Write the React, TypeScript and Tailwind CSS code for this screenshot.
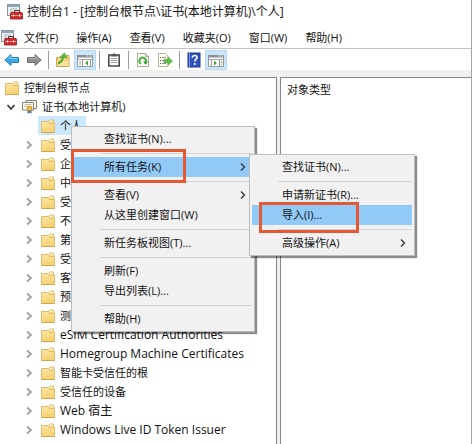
import React, { useState } from "react";

const ConsoleIcon: React.FC = () => (
  <svg width="16" height="16" viewBox="0 0 16 16" className="shrink-0">
    <rect x="0.5" y="0.5" width="12" height="11" fill="#eef1f4" stroke="#8d979f" />
    <rect x="1" y="1" width="11" height="2" fill="#8fa6b8" />
    <path d="M3 5h7M3 7h3" stroke="#a9b4bc" />
    <path d="M7.5 9V7.2Q7.5 6.500 8.200 6.500h3.600q.7 0 .7.7V9" fill="none" stroke="#70282a" strokeWidth="1.200" />
    <path d="M3.500 9.500Q3.500 8.500 4.500 8.500h10q1 0 1 1V15h-12z" fill="#cf2b2b" stroke="#96191c" strokeWidth="0.800" />
    <path d="M4 11.500h11" stroke="#f08d87" />
    <path d="M6.500 10.500v2M12.500 10.500v2" stroke="#fff" />
  </svg>
);

const FolderIcon: React.FC = () => (
  <svg width="14" height="14" viewBox="0 0 14 14" className="shrink-0">
    <defs>
      <linearGradient id="folder" x1="0" y1="0" x2="0.300" y2="1">
        <stop offset="0" stopColor="#fdeaae" />
        <stop offset="1" stopColor="#f8d273" />
      </linearGradient>
    </defs>
    <path d="M.5 2.500h7.200l1-1.500h3.800v2l1 .8v9.700H.5z" fill="url(#folder)" stroke="#dcbc6c" />
    <path d="M8.700 2.300h3" stroke="#fffae6" strokeWidth="1.200" />
    <path d="M7.800 4.300h4.700" stroke="#d9b35a" />
    <path d="M.5 13.500h13" stroke="#cfa64d" />
  </svg>
);

const CertificateIcon: React.FC = () => (
  <svg width="15" height="15" viewBox="0 0 15 15" className="shrink-0">
    <path d="M4 1.500h10.500v8H4z" fill="#fffdf5" stroke="#8a8270" />
    <path d="M.5 3.500h11v7.500H.5z" fill="#fffdf5" stroke="#8a8270" />
    <path d="M2.500 5.500h7M2.500 7.500h3" stroke="#c9bd98" />
    <path d="M5.500 10v4.700l2-1.300 2 1.300V10z" fill="#3b6fb5" />
    <circle cx="7.500" cy="9.500" r="2.400" fill="#f5c13a" stroke="#c08a1c" strokeWidth="0.800" />
  </svg>
);

const TreeArrow: React.FC<{ open?: boolean }> = ({ open }) => (
  <svg width="14" height="14" viewBox="0 0 14 14" fill="none" strokeWidth="1.800" className="shrink-0">
    {open ? <path d="m3.500 5 3.500 4 3.500-4" stroke="#3c3c3c" /> : <path d="m5 3.500 4 3.500-4 3.500" stroke="#a0a0a0" />}
  </svg>
);

const ArrowIcon: React.FC<{ back?: boolean }> = ({ back }) => (
  <svg width="16" height="16" viewBox="0 0 16 16">
    {back ? (
      <path d="M.8 8 7 2.500v3h7.500v5H7v3z" fill="#38a5e4" stroke="#2482bf" strokeLinejoin="round" />
    ) : (
      <path d="M15.200 8 9 2.500v3H1.500v5H9v3z" fill="#8e8e8e" stroke="#6d6d6d" strokeLinejoin="round" />
    )}
    <path
      d={back ? "M3 7.300 6.300 4.500v2h7" : "M13 7.300 9.700 4.500v2h-7"}
      fill="none"
      stroke={back ? "#86d3f7" : "#b5b5b5"}
    />
  </svg>
);

const UpFolderIcon: React.FC = () => (
  <svg width="16" height="16" viewBox="0 0 16 16">
    <path d="M1.500 5.500h7l1-2h4.500v11H1.500z" fill="#f6d47c" stroke="#cda753" />
    <path d="M2 9h11.500v5H2z" fill="#fbe09a" />
    <path d="M3 11.500C5.500 10.500 7.500 8.500 8.200 5" fill="none" stroke="#4bad2f" strokeWidth="2" />
    <path d="M5 5 9.500 1l2.500 5z" fill="#5fc03e" stroke="#3a9628" strokeWidth="0.600" />
  </svg>
);

const PaneIcon: React.FC<{ left?: boolean }> = ({ left }) => (
  <svg width="16" height="14" viewBox="0 0 16 14">
    <path d="M.5 2.500h15v11H.5z" fill="#fbfbfb" stroke="#999" />
    <path d="M0 2h16v2.500H0z" fill="#8c8f93" />
    <path d="M10 3h1M12 3h1M14 3h1" stroke="#fff" />
    <path d="M1 6.500h14" stroke="#a6a6a6" />
    {left ? (
      <>
        <path d="M5.500 7v6.500M13.500 7v6.500" stroke="#999" />
        <path d="M2 9h2M2 11h2" stroke="#999" />
        <path d="M11 7.800v4.600L8 10.100z" fill="#3fa52e" />
      </>
    ) : (
      <>
        <path d="M3.500 7v6.500M11.500 7v6.500" stroke="#999" />
        <path d="M12.500 9h2M12.500 11h2" stroke="#999" />
        <path d="M6 7.800v4.600l3-2.300z" fill="#3fa52e" />
      </>
    )}
  </svg>
);

const ClipboardIcon: React.FC = () => (
  <svg width="14" height="16" viewBox="0 0 14 16">
    <path d="M1.800 3h10.400v11H1.800z" fill="#fff" stroke="#4b4b4b" strokeWidth="1.600" />
    <path d="M4 4.500V2.500h2q0-1.200 1-1.200t1 1.200h2v2z" fill="#555" />
    <path d="M4 6.500h6M4 8.500h6M4 10.500h6" stroke="#999" />
  </svg>
);

const RefreshIcon: React.FC = () => (
  <svg width="14" height="16" viewBox="0 0 14 16">
    <path d="M1.500 1.500h8l3 3v10h-11z" fill="#fdfdf8" stroke="#a8a898" />
    <path d="M9.500 1.500v3h3" fill="none" stroke="#a8a898" />
    <path d="M5 11.800a3.300 3.300 0 1 1 4.800-1.800" fill="none" stroke="#43ad35" strokeWidth="1.800" />
    <path d="M7 9.500h5l-2.500 3.300z" fill="#339b2b" />
  </svg>
);

const ExportIcon: React.FC = () => (
  <svg width="16" height="16" viewBox="0 0 16 16">
    <path d="M1.500 1.500h7l2.500 2.500v10.500h-9.500z" fill="#fffdf0" stroke="#bcb497" />
    <path d="M3 5.500h1M3 8.500h1M3 11.500h1" stroke="#65645e" />
    <path d="M5 5.500h4M5 8.500h2M5 11.500h4" stroke="#9690af" />
    <path d="M7 7.500h4V5l4.500 4-4.500 4v-2.500H7z" fill="#63c348" stroke="#46a331" strokeWidth="0.700" />
  </svg>
);

const HelpIcon: React.FC = () => (
  <svg width="14" height="16" viewBox="0 0 14 16">
    <rect x="1" y="1" width="12" height="14" fill="#2d55bd" stroke="#1b3789" />
    <path d="M2.500 1v14" stroke="#7d99e2" />
    <path d="M5.300 5.700Q5.500 3.500 7.700 3.500T10 5.500C10 7.300 7.800 7.200 7.800 9.500" fill="none" stroke="#fff" strokeWidth="1.600" />
    <circle cx="7.800" cy="12" r="1.100" fill="#fff" />
  </svg>
);

const menus = ["文件(F)", "操作(A)", "查看(V)", "收藏夹(O)", "窗口(W)", "帮助(H)"];

const stores = [
  "受信任的根证书颁发机构",
  "企业信任",
  "中间证书颁发机构",
  "受信任的发布者",
  "不信任的证书",
  "第三方根证书颁发机构",
  "受信任人",
  "客户端身份验证颁发者",
  "预览版本根",
  "测试根",
  "eSIM Certification Authorities",
  "Homegroup Machine Certificates",
  "智能卡受信任的根",
  "受信任的设备",
  "Web 宿主",
  "Windows Live ID Token Issuer",
];

const isLatin = (name: string) => /^[a-z]/i.test(name);

const ToolButton: React.FC<{
  label: string;
  active?: boolean;
  children: React.ReactNode;
}> = ({ label, active, children }) => (
  <button
    aria-label={label}
    className={`flex h-5 w-[22px] items-center justify-center ${
      active ? "border border-[#b5d9f3] bg-[#cce6f9]" : ""
    }`}
  >
    {children}
  </button>
);

const ToolDivider: React.FC = () => (
  <div className="flex h-[18px] w-[7px] justify-center">
    <div className="w-px bg-[#9b9b9b]" />
  </div>
);

const MenuItem: React.FC<{
  label: string;
  active?: boolean;
  arrow?: boolean;
  onClick?: () => void;
}> = ({ label, active, arrow, onClick }) => (
  <button
    role="menuitem"
    onClick={onClick}
    className={`flex h-5 w-full items-center justify-between pl-[30px] pr-1 text-left ${
      active ? "bg-[#91c9f7]" : ""
    }`}
  >
    {label}
    {arrow && (
      <svg width="10" height="10" viewBox="0 0 10 10" fill="none" stroke="#333" strokeWidth="1.300">
        <path d="m3 1.500 3.500 3.500L3 8.500" />
      </svg>
    )}
  </button>
);

const MenuDivider: React.FC = () => (
  <div className="flex h-2 items-center pl-[26px]">
    <div className="h-px w-full bg-[#d2d2d2]" />
  </div>
);

const menuBox =
  "absolute border border-[#bdbdbd] bg-[#f1f1f1] p-[2px] shadow-[2px_2px_1px_rgba(0,0,0,0.45)]";

const App: React.FC = () => {
  const [showTasks, setShowTasks] = useState(true);

  return (
    <div className="relative flex min-h-screen flex-col border-r border-[#a5a5a5] bg-white font-['Open_Sans','Noto_Sans_CJK_SC',sans-serif] text-[11px] leading-4 text-[#111]">
      {/* Title bar */}
      <header className="flex h-6 items-center gap-1 pl-[7px] text-[12px] whitespace-nowrap">
        <ConsoleIcon />
        <h1>控制台1 - [控制台根节点\证书(本地计算机)\个人]</h1>
      </header>

      {/* Menu bar */}
      <nav className="flex h-[25px] items-center border-b border-[#c4c4c4] pl-px pt-[3px]">
        <ConsoleIcon />
        <div className="flex gap-[18px] pl-[7px] whitespace-nowrap">
          {menus.map((menu) => (
            <button key={menu}>{menu}</button>
          ))}
        </div>
      </nav>

      {/* Toolbar */}
      <div className="flex h-[21px] items-center pl-px">
        <ToolButton label="后退">
          <ArrowIcon back />
        </ToolButton>
        <ToolButton label="前进">
          <ArrowIcon />
        </ToolButton>
        <ToolDivider />
        <ToolButton label="向上">
          <UpFolderIcon />
        </ToolButton>
        <ToolButton label="控制台树" active>
          <PaneIcon left />
        </ToolButton>
        <ToolDivider />
        <ToolButton label="粘贴">
          <ClipboardIcon />
        </ToolButton>
        <ToolDivider />
        <ToolButton label="刷新">
          <RefreshIcon />
        </ToolButton>
        <ToolButton label="导出列表">
          <ExportIcon />
        </ToolButton>
        <ToolDivider />
        <ToolButton label="帮助">
          <HelpIcon />
        </ToolButton>
        <ToolButton label="操作窗格" active>
          <PaneIcon />
        </ToolButton>
      </div>

      <main className="flex flex-1 gap-[3px] bg-[#f0f0f0] pt-[7px]">
        {/* Console tree */}
        <ul className="w-[277px] shrink-0 border-t border-r border-[#828790] bg-white">
          <li className="flex h-[19px] items-center gap-[5px] pl-[5px]">
            <FolderIcon />
            控制台根节点
          </li>
          <li className="flex h-[19px] items-center pl-1">
            <TreeArrow open />
            <span className="flex items-center gap-[5px] pl-1">
              <CertificateIcon />
              证书(本地计算机)
            </span>
          </li>
          <li className="flex h-[19px] items-center pl-[38px]">
            <span className="flex h-[19px] items-center gap-[5px] bg-[#cce8ff] pr-1 pl-[3px]">
              <FolderIcon />
              个人
            </span>
          </li>
          {stores.map((store) => (
            <li key={store} className="flex h-[19px] items-center pl-[22px]">
              <TreeArrow />
              <span className="flex items-center gap-[5px] pl-[5px] whitespace-nowrap">
                <FolderIcon />
                <span className={isLatin(store) ? "text-[12px]" : ""}>{store}</span>
              </span>
            </li>
          ))}
        </ul>

        {/* Result pane */}
        <section className="flex-1 border-t border-l border-[#828790] bg-white pt-1 pl-[6px]">
          <h2>对象类型</h2>
        </section>
      </main>

      {/* Context menu */}
      <div role="menu" className={`${menuBox} top-[126px] left-[71px] w-[184px]`}>
        <MenuItem label="查找证书(N)..." />
        <MenuDivider />
        <MenuItem label="所有任务(K)" active arrow onClick={() => setShowTasks(!showTasks)} />
        <MenuDivider />
        <MenuItem label="查看(V)" arrow />
        <MenuItem label="从这里创建窗口(W)" />
        <MenuDivider />
        <MenuItem label="新任务板视图(T)..." />
        <MenuDivider />
        <MenuItem label="刷新(F)" />
        <MenuItem label="导出列表(L)..." />
        <MenuDivider />
        <MenuItem label="帮助(H)" />
      </div>
      <div className="pointer-events-none absolute top-[149px] left-[71px] h-[34px] w-[115px] border-3 border-[#e45836]" />

      {showTasks && (
        <>
          <div role="menu" className={`${menuBox} top-[154px] left-[249px] w-[166px]`}>
            <MenuItem label="查找证书(N)..." />
            <MenuDivider />
            <MenuItem label="申请新证书(R)..." />
            <MenuItem label="导入(I)..." active />
            <MenuDivider />
            <MenuItem label="高级操作(A)" arrow />
          </div>
          <div className="pointer-events-none absolute top-[202px] left-[259px] h-[31px] w-[100px] border-3 border-[#e45836]" />
        </>
      )}
    </div>
  );
};

export default App;
